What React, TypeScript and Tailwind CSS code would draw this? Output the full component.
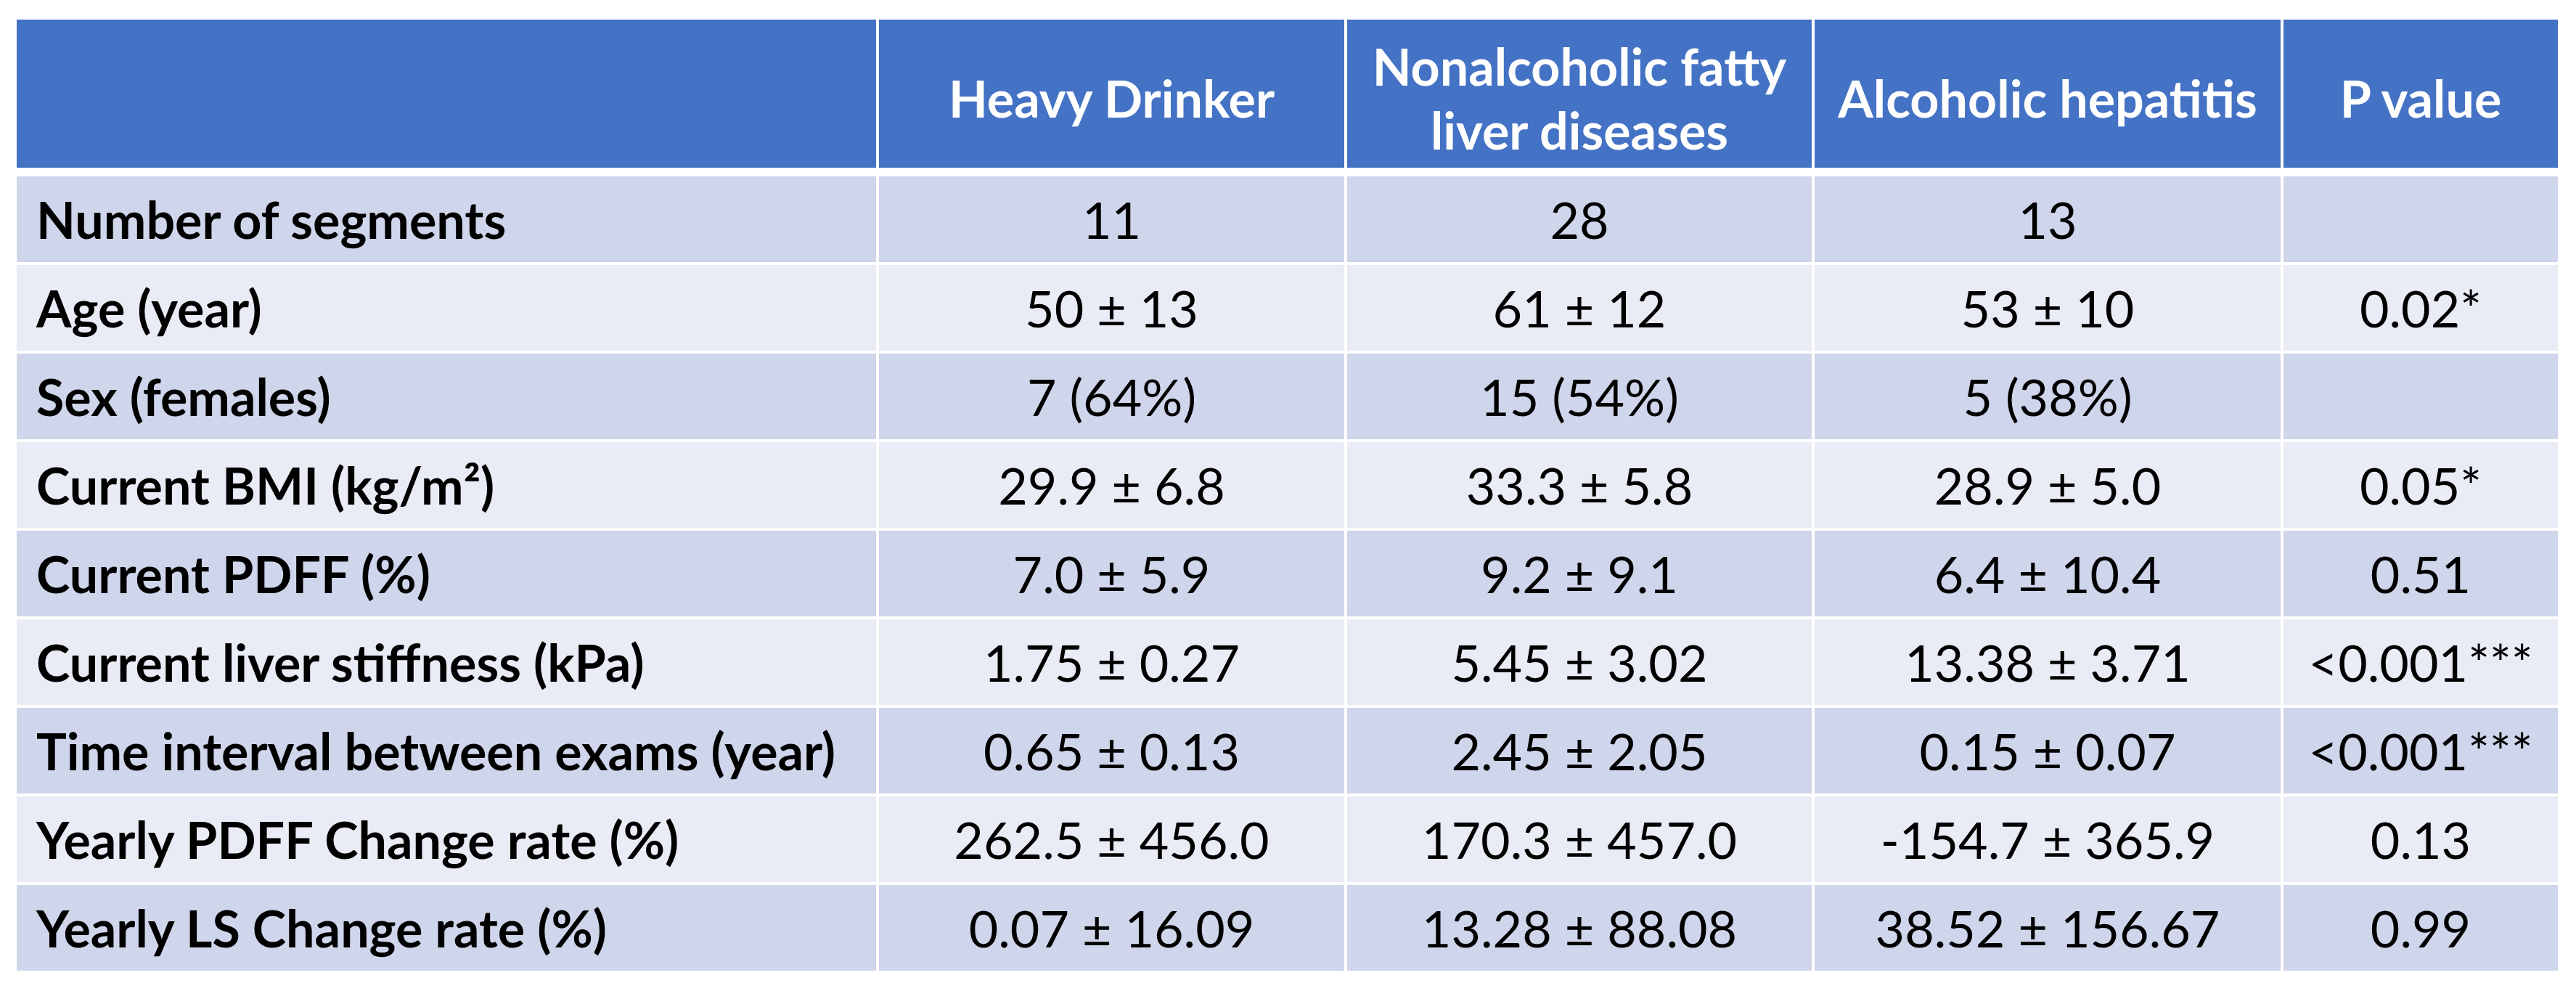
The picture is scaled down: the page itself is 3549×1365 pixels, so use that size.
const headers = ['', 'Heavy Drinker', 'Nonalcoholic fatty liver diseases', 'Alcoholic hepatitis', 'P value'];

const rows: string[][] = [
  ['Number of segments', '11', '28', '13', ''],
  ['Age (year)', '50 ± 13', '61 ± 12', '53 ± 10', '0.02*'],
  ['Sex (females)', '7 (64%)', '15 (54%)', '5 (38%)', ''],
  ['Current BMI (kg/m²)', '29.9 ± 6.8', '33.3 ± 5.8', '28.9 ± 5.0', '0.05*'],
  ['Current PDFF (%)', '7.0 ± 5.9', '9.2 ± 9.1', '6.4 ± 10.4', '0.51'],
  ['Current liver stiffness (kPa)', '1.75 ± 0.27', '5.45 ± 3.02', '13.38 ± 3.71', '<0.001***'],
  ['Time interval between exams (year)', '0.65 ± 0.13', '2.45 ± 2.05', '0.15 ± 0.07', '<0.001***'],
  ['Yearly PDFF Change rate (%)', '262.5 ± 456.0', '170.3 ± 457.0', '-154.7 ± 365.9', '0.13'],
  ['Yearly LS Change rate (%)', '0.07 ± 16.09', '13.28 ± 88.08', '38.52 ± 156.67', '0.99'],
];

const cols = 'grid grid-cols-[1184px_641px_640px_642px_378px] gap-x-[4px]';

export default function App() {
  return (
    <div className="min-h-screen w-full bg-white pt-[27px] pl-[23px] font-['Lato','Open_Sans',sans-serif] text-[70px] leading-[88px]">
      <div className="w-[3501px]">
        {/* Header */}
        <div className={`${cols} h-[204px]`}>
          {headers.map((h, i) => (
            <div
              key={i}
              className="flex items-center justify-center bg-[#4472C4] px-2 pt-3 text-center font-bold text-white"
            >
              {h === 'Nonalcoholic fatty liver diseases' ? (
                <span>
                  Nonalcoholic fatty
                  <br />
                  liver diseases
                </span>
              ) : (
                h
              )}
            </div>
          ))}
        </div>

        {/* Body */}
        <div className="mt-[12px] flex flex-col gap-y-[4px]">
          {rows.map((row, r) => (
            <div key={r} className={`${cols} h-[118px]`}>
              {row.map((cell, c) => (
                <div
                  key={c}
                  className={`flex items-center text-black whitespace-nowrap ${
                    r % 2 === 0 ? 'bg-[#CFD5EA]' : 'bg-[#E9EBF5]'
                  } ${c === 0 ? 'pl-[27px] font-bold' : 'justify-center'}`}
                >
                  {cell}
                </div>
              ))}
            </div>
          ))}
        </div>
      </div>
    </div>
  );
}
